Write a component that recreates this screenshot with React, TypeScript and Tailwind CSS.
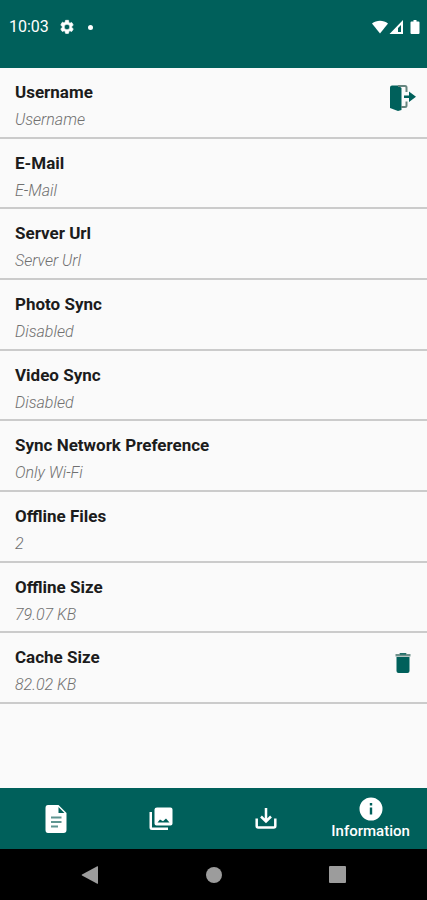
import { useState, type ReactNode } from "react";

const SettingsIcon = () => (
    <svg className="size-4" viewBox="0 0 24 24" fill="currentColor">
        <path d="M19.14 12.94c.04-.3.06-.61.06-.94s-.02-.64-.07-.94l2.03-1.58a.49.49 0 0 0 .12-.61l-1.92-3.32a.49.49 0 0 0-.59-.22l-2.39.96a7 7 0 0 0-1.62-.94l-.36-2.54A.48.48 0 0 0 13.92 2h-3.84a.48.48 0 0 0-.48.41l-.36 2.54c-.59.24-1.13.57-1.62.94l-2.39-.96a.48.48 0 0 0-.59.22L2.74 8.87a.48.48 0 0 0 .12.61l2.03 1.58a6 6 0 0 0 0 1.88l-2.03 1.58a.49.49 0 0 0-.12.61l1.92 3.32c.12.22.37.29.59.22l2.39-.96c.5.38 1.03.7 1.62.94l.36 2.54c.05.24.24.41.48.41h3.84c.24 0 .44-.17.47-.41l.36-2.54a7 7 0 0 0 1.62-.94l2.39.96c.22.08.47 0 .59-.22l1.92-3.32a.49.49 0 0 0-.12-.61zM12 16.2a4.2 4.2 0 1 1 0-8.4 4.2 4.2 0 0 1 0 8.4z" stroke="currentColor" />
    </svg>
);

const StatusIcons = () => (
    <svg className="h-4 w-[49px]" viewBox="0 0 49 16" fill="currentColor">
        <path d="M0 4.500C4.500 0.700 11.500 0.700 16 4.500L8 14.500z" />
        <path fillRule="evenodd" d="M31 1V15H17.500zM29 6L26 9V13H29z" />
        <path d="M39.500 2.500h2V1h3v1.500h2q1 0 1 1V14q0 1-1 1h-7q-1 0-1-1V3.500q0-1 1-1z" />
    </svg>
);

const LogoutIcon = () => (
    <svg className="h-7 w-7" viewBox="0 0 28 28" fill="none">
        <path d="M1 3.500Q1 1.500 3 1.500H9.500L12.500 4V26L9 27L1 24z" fill="#00605b" />
        <path d="M9 2H16Q17.500 2 17.500 3.500V8M17.500 17.500V21.500Q17.500 23 16 23H12" stroke="#66857f" strokeWidth="2" />
        <path d="M15 11.500H20V7.500L27 12.700L20 18V14H15z" fill="#00605b" />
    </svg>
);

const TrashIcon = () => (
    <svg className="h-5 w-4" viewBox="0 0 16 20">
        <path d="M4 1L5 0H11L12 1H15.500V3.500H0.500V1z" fill="#6f918c" />
        <path d="M5 0.300H11V1.500H5z" fill="#00605b" />
        <path d="M1.500 4H14.500V18Q14.500 20 12.500 20H3.500Q1.500 20 1.500 18z" fill="#00605b" />
    </svg>
);

const FileIcon = () => (
    <svg className="h-7 w-[22px]" viewBox="0 0 22 28" fill="currentColor">
        <path fillRule="evenodd" d="M3 0H13.500L21.500 8V25Q21.500 28 18.500 28H3Q0.500 28 0.500 25V3Q0.500 0 3 0zM13.500 2V8H19.500z" />
        <path d="M6 12.500H16.500M6 17H16.500M6 21.500H13" stroke="#5f9591" strokeWidth="2" />
    </svg>
);

const PhotosIcon = () => (
    <svg className="size-6" viewBox="0 0 24 24" fill="currentColor">
        <path fillRule="evenodd" d="M8 0.500H21.500Q23.500 0.500 23.500 2.500V16.500Q23.500 18.500 21.500 18.500H7.500Q5.500 18.500 5.500 16.500V2.500Q5.500 0.500 8 0.500zM8.500 15.500H20.500L17 11.500L14 14.200L11 12.500z" />
        <path d="M0.500 5H3V20.500H19V23H3Q0.500 23 0.500 20.500z" />
    </svg>
);

const DownloadIcon = () => (
    <svg className="h-[22px] w-[22px]" viewBox="0 0 22 22" fill="none" stroke="currentColor" strokeWidth="2.500">
        <path d="M11 0V13M6 8.500L11 13.500L16 8.500" />
        <path d="M1.700 10.500V18Q1.700 19.500 3.200 19.500H18.800Q20.300 19.500 20.300 18V10.500" />
    </svg>
);

const InfoIcon = () => (
    <svg className="size-6" viewBox="0 0 24 24" fill="currentColor">
        <path fillRule="evenodd" d="M12 0.500a11.500 11.500 0 1 0 0 23a11.500 11.500 0 1 0 0-23zM10.800 6H13.200V8.400H10.800zM10.800 10.500H13.200V17.500H10.800z" />
    </svg>
);

type Row = {
    title: string;
    value: string;
    action?: ReactNode;
};

const rows: Row[] = [
    {
        title: "Username",
        value: "Username",
        action: <button className="mt-4 mr-[10px] self-start" aria-label="Log out"><LogoutIcon /></button>,
    },
    { title: "E-Mail", value: "E-Mail" },
    { title: "Server Url", value: "Server Url" },
    { title: "Photo Sync", value: "Disabled" },
    { title: "Video Sync", value: "Disabled" },
    { title: "Sync Network Preference", value: "Only Wi-Fi" },
    { title: "Offline Files", value: "2" },
    { title: "Offline Size", value: "79.07 KB" },
    {
        title: "Cache Size",
        value: "82.02 KB",
        action: <button className="mt-5 mr-4 self-start" aria-label="Clear cache"><TrashIcon /></button>,
    },
];

const tabs = [
    { name: "Files", icon: <FileIcon /> },
    { name: "Photos", icon: <PhotosIcon /> },
    { name: "Downloads", icon: <DownloadIcon /> },
    { name: "Information", icon: <InfoIcon /> },
];

export default function App() {
    const [active, setActive] = useState("Information");

    return (
        <div className="flex min-h-screen flex-col bg-[#fafafa] font-['Roboto',sans-serif]">
            <header className="h-[68px] bg-[#00605b] text-white">
                <div className="flex h-[54px] items-center pr-[6px] pl-[9px]">
                    <span className="text-base">10:03</span>
                    <span className="ml-[10px]"><SettingsIcon /></span>
                    <span className="ml-[13px] size-[5px] rounded-full bg-white"></span>
                    <span className="ml-auto"><StatusIcons /></span>
                </div>
            </header>

            <main className="flex flex-1 flex-col pb-[84px]">
                {rows.map((row) => (
                    <section key={row.title} className="flex flex-1 justify-between border-b-2 border-[#cbcbcb]">
                        <div className="pt-3 pl-[15px]">
                            <h2 className="text-[17px] leading-6 font-bold text-[#1c1c1c]">{row.title}</h2>
                            <p className="mt-1 text-base leading-6 font-light text-[#707070] italic">{row.value}</p>
                        </div>
                        {row.action}
                    </section>
                ))}
            </main>

            <nav className="flex h-[61px] bg-[#00605b] px-1 text-white">
                {tabs.map((tab) => (
                    <button
                        key={tab.name}
                        className="flex flex-1 flex-col items-center justify-center"
                        aria-label={tab.name}
                        onClick={() => setActive(tab.name)}
                    >
                        {tab.icon}
                        {active === tab.name && <span className="text-[15px] leading-5 font-medium">{tab.name}</span>}
                    </button>
                ))}
            </nav>

            <footer className="flex h-[51px] items-center justify-around bg-black px-7 text-[#9c9c9c]">
                <button aria-label="Back">
                    <svg className="size-[18px]" viewBox="0 0 18 18" fill="currentColor">
                        <path d="M17 0.500V17.500Q17 18 16.300 17.800L1 9.500Q0.300 9 1 8.500L16.300 0.200Q17 0 17 0.500z" />
                    </svg>
                </button>
                <button aria-label="Home" className="size-4 rounded-full bg-[#9c9c9c]"></button>
                <button aria-label="Recent apps" className="size-[17px] rounded-[1px] bg-[#9c9c9c]"></button>
            </footer>
        </div>
    );
}
